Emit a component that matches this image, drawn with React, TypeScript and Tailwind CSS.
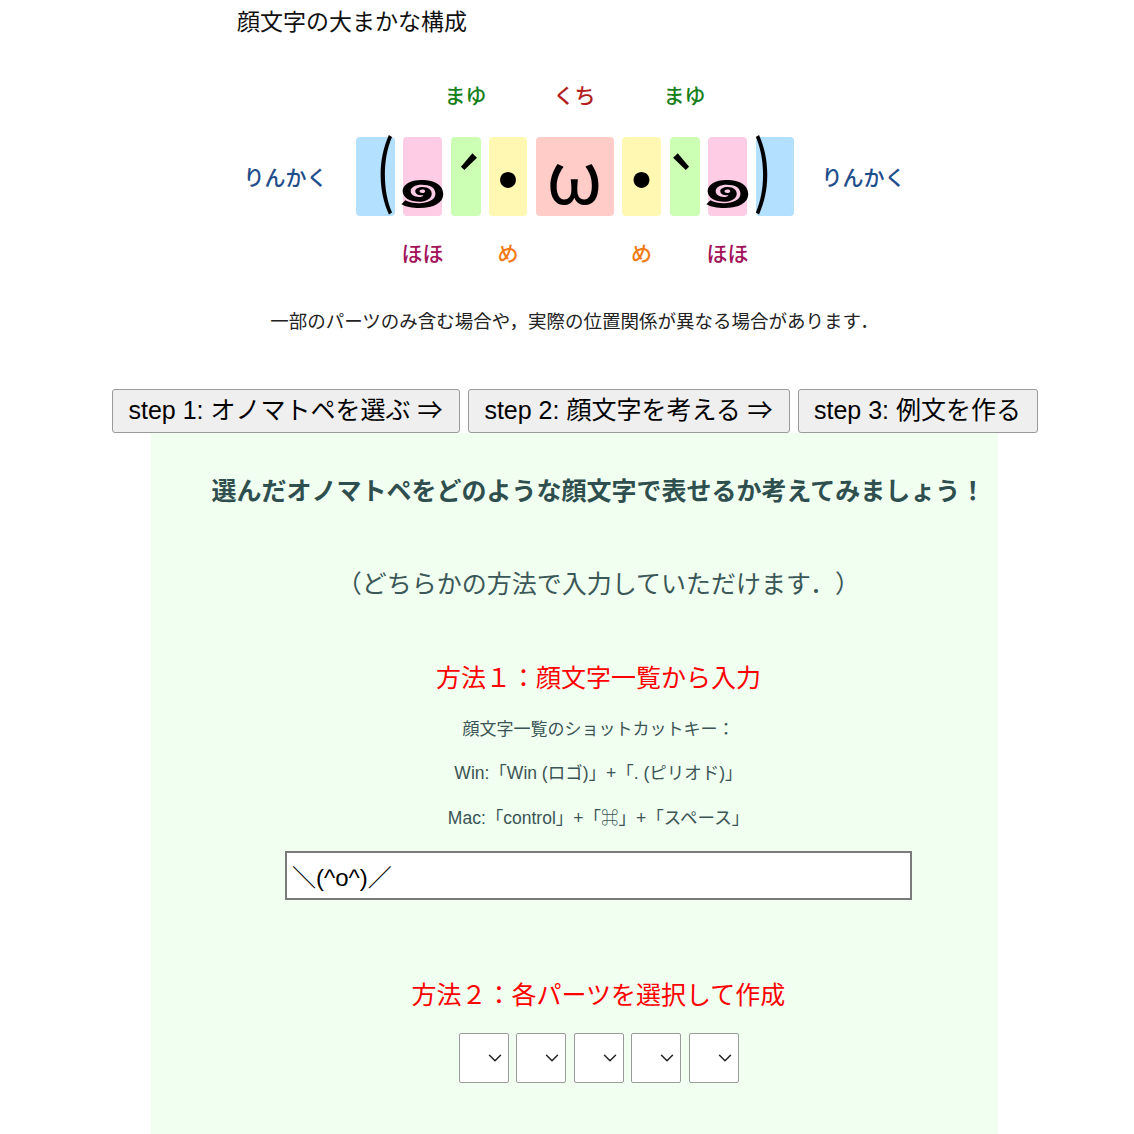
import React from 'react';
import { ChevronDown } from 'lucide-react';

const JP = "font-['Noto_Sans_CJK_JP',sans-serif]";
const LATIN_JP = "font-['Liberation_Sans','Noto_Sans_CJK_JP',sans-serif]";

type Part = {
  w: string;
  bg: string;
  char: string;
  top?: string;
  topColor?: string;
  bottom?: string;
  bottomColor?: string;
  charClass: string;
};

const parts: Part[] = [
  { w: 'w-[39px]', bg: 'bg-[#b3e0ff]', char: '(', charClass: "justify-end items-center text-[56px] scale-y-140 font-['Liberation_Sans'] -mr-[2px] -translate-y-[12px]" },
  { w: 'w-[39px]', bg: 'bg-[#ffcce6]', char: '๑', bottom: 'ほほ', bottomColor: 'text-[#a3125a]', charClass: 'justify-center items-end text-[62px] scale-x-150 -translate-y-[4px]' },
  { w: 'w-[30px]', bg: 'bg-[#ccffb3]', char: '´', top: 'まゆ', topColor: 'text-[#17801a]', charClass: "justify-center items-start pt-[12px] text-[72px] font-['DejaVu_Sans']" },
  { w: 'w-[38px]', bg: 'bg-[#fff8b3]', char: '・', bottom: 'め', bottomColor: 'text-[#f07a14]', charClass: 'justify-center items-center text-[62px] font-bold' },
  { w: 'w-[78px]', bg: 'bg-[#ffccc8]', char: 'ω', top: 'くち', topColor: 'text-[#b51f1f]', charClass: "justify-center items-center text-[72px] font-['DejaVu_Sans'] -mt-[4px]" },
  { w: 'w-[39px]', bg: 'bg-[#fff8b3]', char: '・', bottom: 'め', bottomColor: 'text-[#f07a14]', charClass: 'justify-center items-center text-[62px] font-bold' },
  { w: 'w-[30px]', bg: 'bg-[#ccffb3]', char: '`', top: 'まゆ', topColor: 'text-[#17801a]', charClass: "justify-center items-start pt-[12px] text-[72px] font-['DejaVu_Sans']" },
  { w: 'w-[39px]', bg: 'bg-[#ffcce6]', char: '๑', bottom: 'ほほ', bottomColor: 'text-[#a3125a]', charClass: 'justify-center items-end text-[62px] scale-x-150 -translate-y-[4px]' },
  { w: 'w-[38px]', bg: 'bg-[#b3e0ff]', char: ')', charClass: "justify-start items-center text-[56px] scale-y-140 font-['Liberation_Sans'] -ml-[2px] -translate-y-[12px]" },
];

const Rinkaku = ({ show }: { show: boolean }) => (
  <div className={`w-[80px] flex items-center justify-center text-[21px] font-medium text-[#1f4e8c] whitespace-nowrap ${JP}`}>
    {show ? 'りんかく' : ''}
  </div>
);

const LabelRow = ({ which }: { which: 'top' | 'bottom' }) => (
  <div className="flex justify-center gap-[30px] h-[40px]">
    <Rinkaku show={false} />
    <div className="flex gap-[8.5px]">
      {parts.map((p, i) => (
        <div
          key={i}
          className={`${p.w} flex items-center justify-center whitespace-nowrap text-[21px] font-medium ${JP} ${
            which === 'top' ? p.topColor ?? '' : p.bottomColor ?? ''
          }`}
        >
          {which === 'top' ? p.top : p.bottom}
        </div>
      ))}
    </div>
    <Rinkaku show={false} />
  </div>
);

const Diagram = () => (
  <div className="pt-[35px]">
    <LabelRow which="top" />
    <div className="flex justify-center gap-[30px] h-[79px] mt-[22px]">
      <Rinkaku show />
      <div className="flex gap-[8.5px]">
        {parts.map((p, i) => (
          <div key={i} className={`${p.w} ${p.bg} h-[79px] rounded-[4px] flex`}>
            <div className={`flex w-full h-full text-black leading-none ${JP} ${p.charClass}`}>
              <span className="leading-none">{p.char}</span>
            </div>
          </div>
        ))}
      </div>
      <Rinkaku show />
    </div>
    <div className="mt-[17px]">
      <LabelRow which="bottom" />
    </div>
  </div>
);

const steps = [
  { label: 'step 1: オノマトペを選ぶ ⇒', w: 'w-[348px]' },
  { label: 'step 2: 顔文字を考える ⇒', w: 'w-[322px]' },
  { label: 'step 3: 例文を作る', w: 'w-[240px]' },
];

export default function App() {
  return (
    <div className={`h-[1134px] overflow-hidden bg-white text-black [text-spacing-trim:space-all] ${JP}`}>
      <div className="h-[40px] flex items-center pl-[237px] text-[23px] text-[#111]">顔文字の大まかな構成</div>

      <div className="w-[847px] ml-[151px]">
        <Diagram />

        <p className="h-[40px] mt-[28px] flex items-center justify-center text-[18.5px] text-[#222] whitespace-nowrap">
          一部のパーツのみ含む場合や，実際の位置関係が異なる場合があります．
        </p>

        <div className="-mx-[40px] mt-[48px] flex justify-center gap-[8px]">
          {steps.map((s) => (
            <button
              key={s.label}
              className={`${s.w} h-[44px] bg-[#efefef] border border-[#9a9a9a] rounded-[3px] text-[25px] text-black whitespace-nowrap ${LATIN_JP}`}
            >
              {s.label}
            </button>
          ))}
        </div>

        <div className="bg-[#f0fff0] pl-[48px] pt-[37px] pb-[100px]">
          <h2 className="h-[40px] flex items-center justify-center text-[25px] font-bold text-[#2f4f4f] whitespace-nowrap">
            選んだオノマトペをどのような顔文字で表せるか考えてみましょう！
          </h2>
          <p className="h-[40px] mt-[53px] flex items-center justify-center text-[25px] text-[#3b5757]">
            （どちらかの方法で入力していただけます．）
          </p>

          <h3 className="h-[40px] mt-[54px] flex items-center justify-center text-[25px] text-[#ff0000]">
            方法１：顔文字一覧から入力
          </h3>
          <p className="h-[40px] mt-[11px] flex items-center justify-center text-[17px] text-[#3b5454]">
            顔文字一覧のショットカットキー：
          </p>
          <p className={`h-[40px] mt-[5px] flex items-center justify-center text-[17.5px] text-[#3b5454] ${LATIN_JP}`}>
            Win:「Win (ロゴ)」+「. (ピリオド)」
          </p>
          <p className={`h-[40px] mt-[5px] flex items-center justify-center text-[17.5px] text-[#3b5454] ${LATIN_JP}`}>
            Mac:「control」+「⌘」+「スペース」
          </p>
          <div className="mt-[13px] flex justify-center">
            <input
              readOnly
              value="＼(^o^)／"
              className={`w-[627px] h-[49px] bg-white border-2 border-[#7a7a7a] px-[5px] text-[24px] text-black outline-none ${LATIN_JP}`}
            />
          </div>

          <h3 className="h-[40px] mt-[74px] flex items-center justify-center text-[25px] text-[#ff0000]">
            方法２：各パーツを選択して作成
          </h3>
          <div className="mt-[19px] flex justify-center gap-[7.5px]">
            {[0, 1, 2, 3, 4].map((i) => (
              <div key={i} className="relative w-[50px] h-[50px]">
                <select className="w-full h-full appearance-none bg-white border border-[#9a9a9a] rounded-[2px]" />
                <ChevronDown className="absolute right-[3px] top-[14px] w-[22px] h-[22px] text-[#222] pointer-events-none" strokeWidth={1.6} />
              </div>
            ))}
          </div>
        </div>
      </div>
    </div>
  );
}
